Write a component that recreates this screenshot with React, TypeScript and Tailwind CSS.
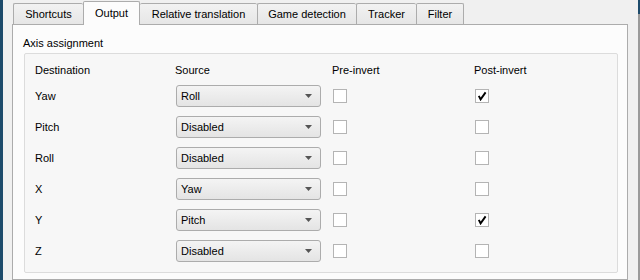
import React from "react";

type Row = { dest: string; source: string; pre: boolean; post: boolean };

const rows: Row[] = [
  { dest: "Yaw", source: "Roll", pre: false, post: true },
  { dest: "Pitch", source: "Disabled", pre: false, post: false },
  { dest: "Roll", source: "Disabled", pre: false, post: false },
  { dest: "X", source: "Yaw", pre: false, post: false },
  { dest: "Y", source: "Pitch", pre: false, post: true },
  { dest: "Z", source: "Disabled", pre: false, post: false },
];

const tabs = [
  { label: "Shortcuts", w: "w-[70px]" },
  { label: "Output", w: "w-[57px]", active: true },
  { label: "Relative translation", w: "w-[117px]" },
  { label: "Game detection", w: "w-[99px]" },
  { label: "Tracker", w: "w-[60px]" },
  { label: "Filter", w: "w-[48px]", last: true },
];

const Combo = ({ value }: { value: string }) => (
  <div className="flex h-[22px] w-[145px] items-center justify-between rounded-[3px] border border-[#acacac] bg-linear-to-b from-[#f4f4f4] to-[#e4e4e4] pl-[4px] pr-[8px]">
    <span>{value}</span>
    <svg width="7" height="4" viewBox="0 0 7 4">
      <path d="M0 0 H7 L3.5 4 Z" fill="#555" />
    </svg>
  </div>
);

const Check = ({ checked }: { checked: boolean }) => (
  <div className="ml-[1px] flex size-[14px] items-center justify-center border border-[#b4b4b4] bg-white">
    {checked && (
      <svg width="10" height="10" viewBox="0 0 10 10">
        <path d="M1.8 4.8 L3.6 8.4 L8.6 1.4" fill="none" stroke="#000" strokeWidth="1.9" />
      </svg>
    )}
  </div>
);

export default function App() {
  return (
    <div className="flex h-[280px] w-[640px] overflow-hidden bg-[#f0f0f0] font-['Liberation_Sans',Arial,sans-serif] text-[11px] text-black">
      <div className="w-[3px] bg-[#1d4b6b]" />

      <div className="ml-[9px] flex w-[616px] flex-col pt-[1px]">
        {/* tab strip */}
        <div className="relative z-10 -mb-[1px] flex h-[24px] items-end pl-[1px]">
          {tabs.map((t) =>
            t.active ? (
              <div
                key={t.label}
                className={`${t.w} flex h-[24px] items-center justify-center rounded-t-[2px] border-x border-t border-[#acacac] bg-[#fcfcfc] pb-[1px]`}
              >
                {t.label}
              </div>
            ) : (
              <div
                key={t.label}
                className={`${t.w} mb-[1px] flex h-[21px] items-center justify-center rounded-t-[2px] border-t border-l border-[#acacac] bg-linear-to-b from-[#f2f2f2] to-[#e6e6e6] ${t.last ? "border-r" : ""} ${t.label === "Relative translation" ? "border-l-0" : ""}`}
              >
                {t.label}
              </div>
            ),
          )}
        </div>

        {/* tab page */}
        <div className="flex-1 border border-[#acacac] bg-[#fcfcfc] pl-[11px] pr-[9px] pt-[12px]">
          <div className="mb-[3px] h-[13px] leading-[13px] -ml-[1px]">Axis assignment</div>
          <div className="rounded-[2px] border border-[#dcdcdc] bg-[#f7f7f7] pb-[10px] pl-[10px] pt-[5px]">
            <div className="grid h-[22px] grid-cols-[141px_156px_142px_1fr] items-center">
              <span>Destination</span>
              <span className="-ml-[1px]">Source</span>
              <span>Pre-invert</span>
              <span>Post-invert</span>
            </div>
            <div className="mt-[4px] flex flex-col gap-[9px]">
              {rows.map((r) => (
                <div key={r.dest} className="grid h-[22px] grid-cols-[141px_156px_142px_1fr] items-center">
                  <span>{r.dest}</span>
                  <Combo value={r.source} />
                  <Check checked={r.pre} />
                  <Check checked={r.post} />
                </div>
              ))}
            </div>
          </div>
        </div>
      </div>

      <div className="ml-[10px] flex w-[2px] flex-col bg-[#9a9a9a]">
        <div className="h-[14px] bg-[#1d4b6b]" />
      </div>
    </div>
  );
}
